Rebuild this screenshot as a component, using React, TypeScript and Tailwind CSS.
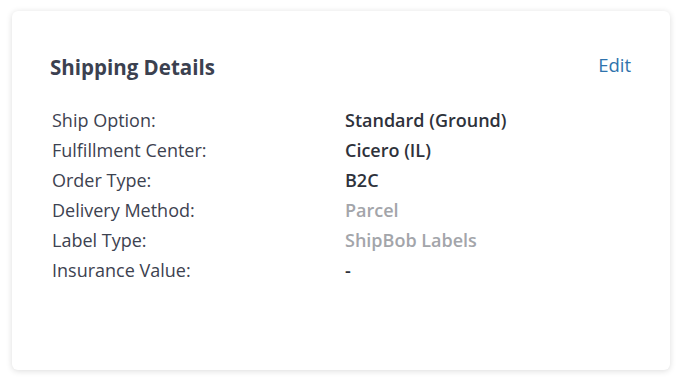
import React from 'react';

const rows: { label: string; value: string; muted?: boolean }[] = [
  { label: 'Ship Option:', value: 'Standard (Ground)' },
  { label: 'Fulfillment Center:', value: 'Cicero (IL)' },
  { label: 'Order Type:', value: 'B2C' },
  { label: 'Delivery Method:', value: 'Parcel', muted: true },
  { label: 'Label Type:', value: 'ShipBob Labels', muted: true },
  { label: 'Insurance Value:', value: '-' },
];

export default function App() {
  return (
    <div className="w-[693px] h-[381px] bg-white pt-[11px] pl-[12px] font-['Open_Sans',sans-serif]">
      <div className="w-[658px] h-[359px] bg-white rounded-md shadow-[0_1px_6px_rgba(0,0,0,0.14)] pt-[44px] pl-[38px] pr-[39px]">
        <div className="flex items-center justify-between h-[24px]">
          <h3 className="text-[20.5px] font-bold text-[#3b4150]">Shipping Details</h3>
          <a className="text-[18.5px] text-[#2f73ad] cursor-pointer -mt-[5px]">Edit</a>
        </div>
        <div className="mt-[26px] pl-[2px]">
          {rows.map(r => (
            <div key={r.label} className="flex h-[30px] items-center text-[18px]">
              <div className="w-[293px] text-[#3d4250]">{r.label}</div>
              <div className={r.muted ? 'font-semibold text-[#a3a5aa]' : 'font-semibold text-[#2e323b]'}>{r.value}</div>
            </div>
          ))}
        </div>
      </div>
    </div>
  );
}
